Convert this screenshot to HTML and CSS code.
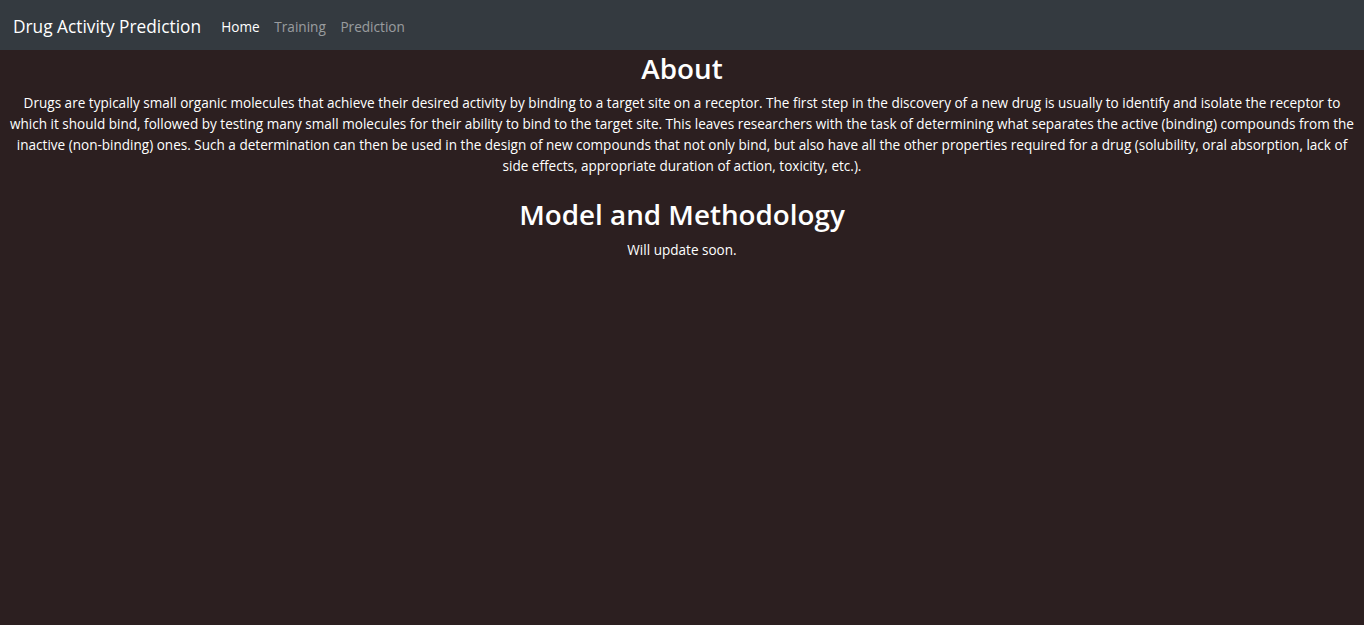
FILE: index.html
```html
<!DOCTYPE html>
<html lang="en">
<head>
<meta charset="utf-8">
<title>Drug Activity Prediction</title>
<link rel="stylesheet" href="styles.css">
</head>
<body>
<nav class="navbar">
  <a class="brand" href="#">Drug Activity Prediction</a>
  <ul class="nav">
    <li><a class="nav-link active" href="#">Home</a></li>
    <li><a class="nav-link" href="#">Training</a></li>
    <li><a class="nav-link" href="#">Prediction</a></li>
  </ul>
</nav>
<main class="content">
  <h2 class="title">About</h2>
  <p class="text">Drugs are typically small organic molecules that achieve their desired activity by binding to a target site on a receptor. The first step in the discovery of a new drug is usually to identify and isolate the receptor to which it should bind, followed by testing many small molecules for their ability to bind to the target site. This leaves researchers with the task of determining what separates the active (binding) compounds from the inactive (non-binding) ones. Such a determination can then be used in the design of new compounds that not only bind, but also have all the other properties required for a drug (solubility, oral absorption, lack of side effects, appropriate duration of action, toxicity, etc.).</p>
  <h2 class="title">Model and Methodology</h2>
  <p class="text">Will update soon.</p>
</main>
</body>
</html>
```
FILE: styles.css
```css
html, body {
  margin: 0;
  padding: 0;
}
body {
  background: #2c1f20;
  color: #ffffff;
  font-family: "Open Sans", "Noto Sans", sans-serif;
  font-size: 13.55px;
  line-height: 21px;
  min-height: 625px;
}
.navbar {
  display: flex;
  align-items: center;
  height: 50px;
  box-sizing: border-box;
  padding: 2px 14px 0 13px;
  background: #343a40;
}
.brand {
  color: #ffffff;
  text-decoration: none;
  font-size: 17.3px;
  margin-right: 13px;
}
.nav {
  display: flex;
  list-style: none;
  margin: 0;
  padding: 0;
}
.nav-link {
  display: block;
  padding: 0 7.3px;
  color: rgba(255, 255, 255, 0.5);
  text-decoration: none;
  font-size: 13.6px;
}
.nav-link.active {
  color: #ffffff;
}
.content {
  text-align: center;
  padding: 0 4px;
}
.title {
  margin: 2px 0 8px;
  font-size: 27.8px;
  font-weight: 600;
  line-height: 1.2;
}
.text {
  margin: 0 0 21px;
}
```
